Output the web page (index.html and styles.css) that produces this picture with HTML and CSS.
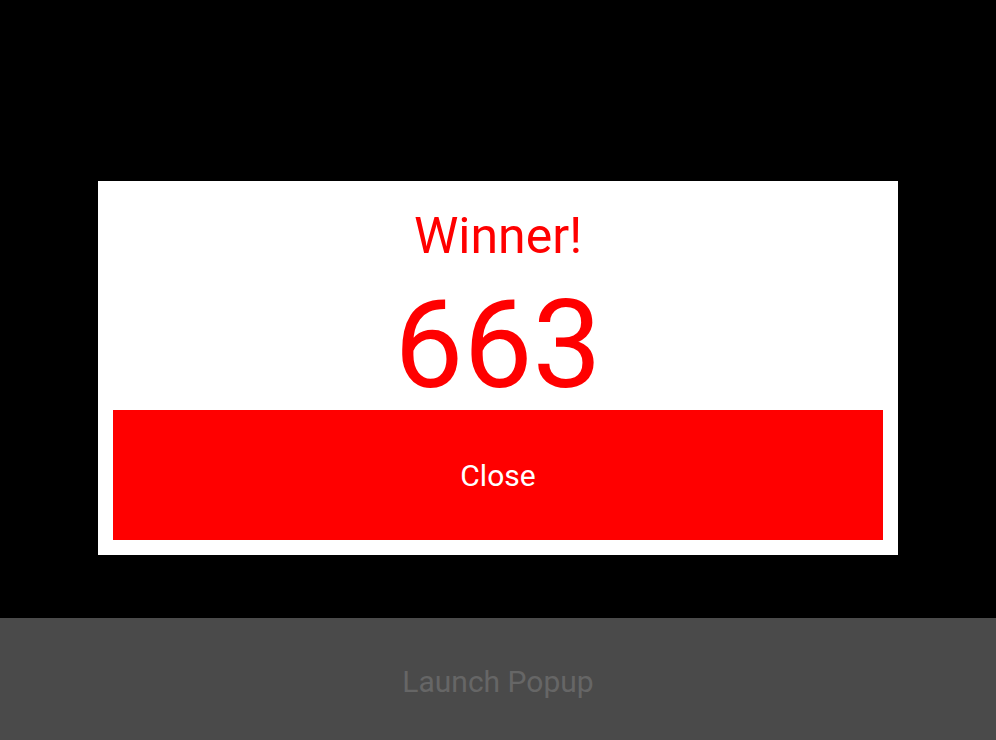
FILE: index.html
```html
<!DOCTYPE html>
<html>
<head>
<meta charset="utf-8">
<link rel="stylesheet" href="styles.css">
</head>
<body>
<div class="page">
  <main class="stage"></main>
  <button class="launch">Launch Popup</button>
</div>
<div class="overlay">
  <div class="popup">
    <div class="title">Winner!</div>
    <div class="number">663</div>
    <button class="close">Close</button>
  </div>
</div>
</body>
</html>
```
FILE: styles.css
```css
html, body {
  margin: 0;
  padding: 0;
  background: #000;
  font-family: Roboto, "Liberation Sans", sans-serif;
}
.page {
  height: 740px;
  display: flex;
  flex-direction: column;
}
.stage {
  flex: 1;
  background: #000;
}
.launch {
  height: 122px;
  border: 0;
  margin: 0;
  background: #4a4a4a;
  color: #666666;
  font-family: Roboto, "Liberation Sans", sans-serif;
  font-size: 30px;
  padding: 4px 0 0 0;
}
.overlay {
  position: fixed;
  inset: 0;
  display: flex;
  align-items: center;
  justify-content: center;
  padding-bottom: 4px;
}
.popup {
  width: 800px;
  height: 374px;
  box-sizing: border-box;
  background: #fff;
  padding: 15px;
  display: flex;
  flex-direction: column;
  align-items: stretch;
}
.title {
  color: #ff0000;
  font-size: 50px;
  line-height: 56px;
  text-align: center;
  margin-top: 12px;
}
.number {
  color: #ff0000;
  font-size: 123px;
  line-height: 123px;
  text-align: center;
  margin-top: 20px;
}
.close {
  margin-top: auto;
  height: 130px;
  flex-shrink: 0;
  border: 0;
  background: #ff0000;
  color: #fff;
  font-family: Roboto, "Liberation Sans", sans-serif;
  font-size: 30px;
  padding: 0;
}
```
